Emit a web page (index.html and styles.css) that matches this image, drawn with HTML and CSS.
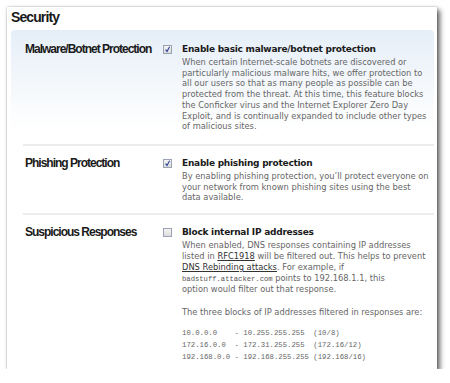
FILE: index.html
```html
<!DOCTYPE html>
<html>
<head>
<meta charset="utf-8">
<link rel="stylesheet" href="styles.css">
</head>
<body>
<div class="card">
  <h1 class="heading">Security</h1>
  <div class="panel">
    <div class="row">
      <div class="label">Malware/Botnet Protection</div>
      <span class="cb"><svg viewBox="0 0 9 9" width="9" height="9"><path d="M2.6 4.6 L4 6.4 L6.6 1.8" fill="none" stroke="#2a3f9a" stroke-width="1.1"/></svg></span>
      <div class="body">
        <div class="opt">Enable basic malware/botnet protection</div>
        <p class="desc">When certain Internet-scale botnets are discovered or<br>particularly malicious malware hits, we offer protection to<br>all our users so that as many people as possible can be<br>protected from the threat. At this time, this feature blocks<br>the Conficker virus and the Internet Explorer Zero Day<br>Exploit, and is continually expanded to include other types<br>of malicious sites.</p>
      </div>
    </div>
    <div class="row">
      <div class="label">Phishing Protection</div>
      <span class="cb"><svg viewBox="0 0 9 9" width="9" height="9"><path d="M2.6 4.6 L4 6.4 L6.6 1.8" fill="none" stroke="#2a3f9a" stroke-width="1.1"/></svg></span>
      <div class="body">
        <div class="opt">Enable phishing protection</div>
        <p class="desc">By enabling phishing protection, you’ll protect everyone on<br>your network from known phishing sites using the best<br>data available.</p>
      </div>
    </div>
    <div class="row last">
      <div class="label">Suspicious Responses</div>
      <span class="cb"></span>
      <div class="body">
        <div class="opt">Block internal IP addresses</div>
        <p class="desc">When enabled, DNS responses containing IP addresses<br>listed in <a class="lnk">RFC1918</a> will be filtered out. This helps to prevent<br><a class="lnk">DNS Rebinding attacks</a>. For example, if<br><code class="mono">badstuff.attacker.com</code> points to 192.168.1.1, this<br>option would filter out that response.</p>
        <p class="desc gap">The three blocks of IP addresses filtered in responses are:</p>
        <pre class="ips">10.0.0.0    - 10.255.255.255  (10/8)
172.16.0.0  - 172.31.255.255  (172.16/12)
192.168.0.0 - 192.168.255.255 (192.168/16)</pre>
      </div>
    </div>
  </div>
</div>
</body>
</html>
```
FILE: styles.css
```css
html, body {
  margin: 0;
  padding: 0;
  background: #fff;
}
.card {
  margin: 7px 0 0 7px;
  width: 430px;
  height: 362px;
  overflow: hidden;
  background: #fff;
  box-shadow: 3px 3px 5px rgba(0,0,0,0.6), 0 0 2px rgba(0,0,0,0.3);
  padding-top: 2px;
  box-sizing: border-box;
}
.heading {
  margin: 0 0 5px 4px;
  font: bold 14px/16px "Liberation Sans", Arial, sans-serif;
  letter-spacing: -0.9px;
  color: #1a1a1a;
}
.panel {
  margin: 0 3px 0 4px;
  border-radius: 4px 4px 0 0;
  background: linear-gradient(#e5eef8 0px, #f3f7fb 50px, #fff 100px);
}
.row {
  margin-left: 12px;
  display: grid;
  grid-template-columns: 140px 19px 1fr;
  align-items: start;
  padding: 10px 0;
  border-bottom: 2px solid #ececec;
}
.row:first-child {
  padding: 12px 0;
}
.row.last {
  border-bottom: none;
}
.label {
  padding-left: 2px;
  font: bold 12px/14px "Liberation Sans", Arial, sans-serif;
  letter-spacing: -1.0px;
  color: #1a1a1a;
}
.cb {
  display: block;
  width: 9px;
  height: 9px;
  margin-top: 3px;
  box-sizing: border-box;
  border: 1px solid #9aa3b3;
  background: linear-gradient(#f4f4f4, #dcdcdc);
  position: relative;
}
.cb svg {
  position: absolute;
  left: -1px;
  top: -1px;
}
.body {
  min-width: 0;
}
.opt {
  font: bold 9px/14px "DejaVu Sans", Verdana, sans-serif;
  letter-spacing: -0.25px;
  color: #1a1a1a;
}
.desc {
  margin: 1px 0 0;
  font: 8.3px/10.7px "DejaVu Sans", Verdana, sans-serif;
  color: #666;
  white-space: nowrap;
}
.last .desc {
  line-height: 11px;
}
.desc.gap {
  margin-top: 11.5px;
}
.lnk {
  color: #333;
  text-decoration: underline;
}
.mono {
  font-family: "Liberation Mono", "Courier New", monospace;
  font-size: 7.2px;
  line-height: 1;
  color: #555;
}
.ips {
  margin: 9.5px 0 0;
  font: 7.3px/12px "Liberation Mono", "Courier New", monospace;
  color: #666;
}
```
